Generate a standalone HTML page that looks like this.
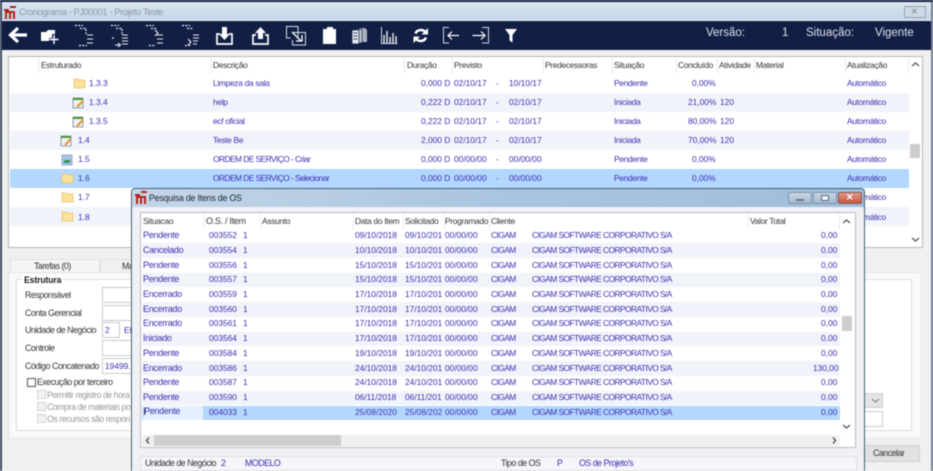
<!DOCTYPE html>
<html><head><meta charset="utf-8"><style>
html,body{margin:0;padding:0;width:933px;height:471px;overflow:hidden;background:#f0f0f0}
#w{position:absolute;left:0;top:0;width:933px;height:471px;overflow:hidden;font:8.4px "Liberation Sans",sans-serif;color:#3a2fb0;filter:blur(.4px)}
#w div,#w span,#w svg{position:absolute}
#w span{white-space:nowrap;line-height:11px}
.t{letter-spacing:-.3px}
.s{font-size:9px;letter-spacing:-.3px}
.u{letter-spacing:-.55px}
.l{font-size:8.8px;letter-spacing:-.48px}
.k{color:#333}
.r{height:19.2px;left:10px;width:899px}
.alt{background:#f1f3fa}
.d{height:14.7px;left:142px;width:698px}
.c{background:#fff;border:1px solid #c9c9c9;box-sizing:border-box}
.b{font-size:11.5px;color:#dfe4ee;line-height:14px}
.sep{width:1px;background:#e8e8e8}
.cb{background:#f2f2f2;border:1px solid #d4d4d4;box-sizing:border-box}
.g{color:#999}
</style></head><body><div id="w">
<!-- frame -->
<div style="left:0;top:0;width:933px;height:2px;background:#101c3e"></div>
<div style="left:0;top:2px;width:2px;height:469px;background:#3c4a5e"></div>
<div style="left:931px;top:2px;width:2px;height:469px;background:#6f7f90"></div>
<div style="left:2px;top:2px;width:929px;height:18px;background:linear-gradient(#dbe6f1,#c3d6e8)"></div>
<svg style="left:4px;top:6px" width="12" height="13" viewBox="0 0 12 13"><path d="M0 3h5v2H0zM6 0h6v2H6zM1 6h2v7H1zM5 6h2v7H5zM9 6h2v7H9zM1 5h10v2H1z" fill="#b3231c"/></svg>
<span style="left:19px;top:7px;font-size:9.2px;letter-spacing:-.36px;color:#8b96a2">Cronograma - PJ00001 - Projeto Teste</span>
<div style="left:904px;top:6px;width:22px;height:12px;border:1px solid #93a3b3;box-sizing:border-box;background:#ccd8e3"></div>
<span style="left:911px;top:6px;font-size:8px;color:#778">✕</span>
<!-- toolbar -->
<div style="left:2px;top:21px;width:929px;height:29px;background:#121f45"></div>
<svg style="left:0;top:21px" width="560" height="29" viewBox="0 0 560 29" fill="none" stroke="#fff">
<path d="M27 14H12M18 7L10.500 14 18 21" stroke-width="3.200"/>
<path d="M41 11h5l2-2h7v4h-3v4h-3v3h-8z" fill="#fff" stroke="none"/><path d="M54 14v9M49.500 18.500h9" stroke-width="1.400"/>
<g stroke-dasharray="2 1.300" stroke-width="1.200" stroke="#e8ebf2"><path d="M75 4.500h8M80 7.500h6M86 8v5M79 24.500h8"/><path d="M111 4.500h8M116 7.500h6M122 8v5M112 17h3"/><path d="M146 4.500h8M151 7.500h6M149 24.500h6"/><path d="M182 4.500h8M187 7.500h6M185 24.500h6"/></g>
<path d="M87 14h6M87 18h6M87 22h6M122 14h6M122 17h6M122 20h6M122 23h6M115 24h6M118 22l2.500 2-2.500 2M157 14h6M157 18h6M157 22h6M193 14h6M193 17h6M193 20h5M193 23h4" stroke-width="1" stroke="#e8ebf2"/>
<path d="M155 9l3 3-3 3M188 18l3 3-3 3" stroke-width="1"/>
<path d="M220 13h-3v10h15V13h-3" stroke-width="1.700"/><path d="M222 6h5v7h3l-5.500 6-5.500-6h3z" fill="#fff" stroke="none"/>
<path d="M256 14h-3v9h15v-9h-3" stroke-width="1.700"/><path d="M258 18V12h-3l5.500-6 5.500 6h-3v6z" fill="#fff" stroke="none"/>
<path d="M298 16V5.500h-11.500V17h4M292 11.500h13.500v12.500h-13v-5" stroke-width="1" stroke="#d8dde6"/><path d="M292 11l9 9M302 14v6h-6" stroke-width="1.300"/>
<path d="M323 8h4V6h6v2h3v15h-13z" fill="#fff" stroke="none"/>
<path d="M360 7h5l2 2v12h-7z" fill="#aab0bd" stroke="none"/><path d="M356 8h6v14h-6z" fill="#c4c9d3" stroke="#121f45" stroke-width=".7"/><path d="M352 9h7v14h-7z" fill="#e2e5ea" stroke="#121f45" stroke-width=".7"/><path d="M353.500 12h4M353.500 15h4M353.500 18h4" stroke="#121f45" stroke-width=".8"/>
<path d="M381.500 6v16.500h16" stroke-width="1" stroke="#d8dde6"/><path d="M384 22v-8M387 22v-12M390 22v-6M393 22v-10M396 22v-7" stroke-width="1.500" stroke="#dfe3ea"/>
<path d="M415.500 12.500c1.500-4 7-4.500 10-1.500M426 16.500c-1.500 4-7 4.500-10 1.500" stroke-width="2.500"/><path d="M428 7v6.500h-6.500zM413.500 22v-6.500h6.500z" fill="#fff" stroke="none"/>
<path d="M449 6.500h-5.500v15.500h5.500" stroke-width="1" stroke="#cfd5e0"/><path d="M459 14.500h-11M452 10.500l-4 4 4 4" stroke-width="1.200"/>
<path d="M482 6.500h6.500v15.500h-6.500" stroke-width="1" stroke="#cfd5e0"/><path d="M472.500 14.500h12M481 10.500l4 4-4 4" stroke-width="1.200"/>
<path d="M505 8h12l-4.500 6v7.500l-3-2v-5.500z" fill="#fff" stroke="none"/>
</svg>
<span class="b" style="left:706px;top:28px">Versão:</span>
<span class="b" style="left:782px;top:28px">1</span>
<span class="b" style="left:806px;top:28px">Situação:</span>
<span class="b" style="left:875px;top:28px">Vigente</span>
<!-- tree panel -->
<div class="c" style="left:8px;top:56px;width:915px;height:192px;border-color:#b8b8b8"></div>
<span class="k t" style="left:41px;top:60px">Estruturado</span><span class="k t" style="left:213px;top:60px">Descrição</span><span class="k t" style="left:407px;top:60px">Duração</span><span class="k t" style="left:454px;top:60px">Previsto</span><span class="k t" style="left:545px;top:60px">Predecessoras</span><span class="k t" style="left:614px;top:60px">Situação</span><span class="k t" style="left:678px;top:60px">Concluído</span><span class="k t" style="left:719px;top:60px">Atividade</span><span class="k t" style="left:756px;top:60px">Material</span><span class="k t" style="left:847px;top:60px">Atualização</span>
<div class="sep" style="left:38px;top:58px;height:15px"></div><div class="sep" style="left:211px;top:58px;height:15px"></div><div class="sep" style="left:404px;top:58px;height:15px"></div><div class="sep" style="left:452px;top:58px;height:15px"></div><div class="sep" style="left:543px;top:58px;height:15px"></div><div class="sep" style="left:612px;top:58px;height:15px"></div><div class="sep" style="left:676px;top:58px;height:15px"></div><div class="sep" style="left:717px;top:58px;height:15px"></div><div class="sep" style="left:754px;top:58px;height:15px"></div><div class="sep" style="left:845px;top:58px;height:15px"></div><div class="sep" style="left:908px;top:58px;height:15px"></div>
<div class="r alt" style="top:93px"></div><div class="r alt" style="top:131px"></div><div class="r" style="top:169px;background:#b3d7ff"></div><div class="r alt" style="top:207px"></div>
<!-- tree icons -->
<svg style="left:0;top:0" width="120" height="230" viewBox="0 0 120 230">
<g fill="#fae29a" stroke="#e8c06c" stroke-width=".8"><path d="M74 79h4l1 1h6v8H74z"/><path d="M62 174h4l1 1h6v8H62z"/><path d="M62 193h4l1 1h6v8H62z"/><path d="M62 212h4l1 1h6v8H62z"/></g>
<g fill="#eef0f3" stroke="#7b8794" stroke-width=".8"><path d="M73 98h10v10H73z"/><path d="M73 117h10v10H73z"/><path d="M61 136h10v10H61z"/></g>
<path d="M73 98h10v2H73zM73 117h10v2H73zM61 136h10v2H61z" fill="#4a9a3c"/>
<path d="M77 107l6-6M77 126l6-6M65 145l6-6" stroke="#d79a2b" stroke-width="2"/>
<path d="M62 155h10v10H62z" fill="#a9c6ea" stroke="#7c9cc5" stroke-width=".8"/><path d="M64 160h6v3h-6z" fill="#3f8f58"/>
</svg>
<span style="left:89px;top:78px">1.3.3</span><span class="t" style="left:213px;top:78px">Limpeza da sala</span><span style="left:421px;top:78px">0,000 D</span><span style="left:454px;top:78px">02/10/17</span><span style="left:496px;top:78px">-</span><span style="left:509px;top:78px">10/10/17</span><span class="t" style="left:614px;top:78px">Pendente</span><span style="left:692px;top:78px">0,00%</span><span class="t" style="left:847px;top:78px">Automático</span>
<span style="left:89px;top:97px">1.3.4</span><span class="t" style="left:213px;top:97px">help</span><span style="left:421px;top:97px">0,222 D</span><span style="left:454px;top:97px">02/10/17</span><span style="left:496px;top:97px">-</span><span style="left:509px;top:97px">02/10/17</span><span class="t" style="left:614px;top:97px">Iniciada</span><span style="left:688px;top:97px">21,00%</span><span style="left:720px;top:97px">120</span><span class="t" style="left:847px;top:97px">Automático</span>
<span style="left:89px;top:116px">1.3.5</span><span class="t" style="left:213px;top:116px">ecf oficial</span><span style="left:421px;top:116px">0,222 D</span><span style="left:454px;top:116px">02/10/17</span><span style="left:496px;top:116px">-</span><span style="left:509px;top:116px">02/10/17</span><span class="t" style="left:614px;top:116px">Iniciada</span><span style="left:688px;top:116px">80,00%</span><span style="left:720px;top:116px">120</span><span class="t" style="left:847px;top:116px">Automático</span>
<span style="left:78px;top:135px">1.4</span><span class="t" style="left:213px;top:135px">Teste Be</span><span style="left:421px;top:135px">2,000 D</span><span style="left:454px;top:135px">02/10/17</span><span style="left:496px;top:135px">-</span><span style="left:509px;top:135px">02/10/17</span><span class="t" style="left:614px;top:135px">Iniciada</span><span style="left:688px;top:135px">70,00%</span><span style="left:720px;top:135px">120</span><span class="t" style="left:847px;top:135px">Automático</span>
<span style="left:78px;top:154px">1.5</span><span class="u" style="left:213px;top:154px">ORDEM DE SERVIÇO - Criar</span><span style="left:421px;top:154px">0,000 D</span><span style="left:454px;top:154px">00/00/00</span><span style="left:496px;top:154px">-</span><span style="left:509px;top:154px">00/00/00</span><span class="t" style="left:614px;top:154px">Pendente</span><span style="left:692px;top:154px">0,00%</span><span class="t" style="left:847px;top:154px">Automático</span>
<span style="left:78px;top:173px">1.6</span><span class="u" style="left:213px;top:173px">ORDEM DE SERVIÇO - Selecionar</span><span style="left:421px;top:173px">0,000 D</span><span style="left:454px;top:173px">00/00/00</span><span style="left:496px;top:173px">-</span><span style="left:509px;top:173px">00/00/00</span><span class="t" style="left:614px;top:173px">Pendente</span><span style="left:692px;top:173px">0,00%</span><span class="t" style="left:847px;top:173px">Automático</span>
<span style="left:78px;top:192px">1.7</span><span class="t" style="left:847px;top:192px">Automático</span>
<span style="left:78px;top:212px">1.8</span><span class="t" style="left:847px;top:212px">Automático</span>
<!-- tree scrollbar -->
<div style="left:909px;top:57px;width:13px;height:190px;background:#fff"></div>
<svg style="left:910px;top:60px" width="11" height="8"><path d="M2 6l3.500-3 3.500 3" fill="none" stroke="#555" stroke-width="1.300"/></svg>
<svg style="left:910px;top:236px" width="11" height="8"><path d="M2 2l3.500 3 3.500-3" fill="none" stroke="#555" stroke-width="1.300"/></svg>
<div style="left:910px;top:144px;width:10px;height:14px;background:#cdcdcd"></div>
<!-- bottom left -->
<div style="left:10px;top:259px;width:90px;height:14px;background:#f5f5f5;border:1px solid #e0e0e0;box-sizing:border-box"></div>
<div style="left:100px;top:259px;width:40px;height:14px;background:#f0f0f0;border:1px solid #e0e0e0;box-sizing:border-box"></div>
<span class="k l" style="left:34px;top:261px">Tarefas (0)</span><span class="k l" style="left:122px;top:261px">Ma</span>
<div style="left:8px;top:272px;width:914px;height:167px;background:#f9f9f9;border:1px solid #e4e4e4;box-sizing:border-box"></div>
<div style="left:16px;top:279px;width:896px;height:152px;background:#fff;border:1px solid #dcdcdc;box-sizing:border-box"></div>
<span style="left:22px;top:275px;padding:0 2px;background:#fff;color:#222;font-weight:bold;font-size:8.800px;letter-spacing:-.2px">Estrutura</span>
<span class="k l" style="left:25px;top:290px">Responsável</span><span class="k l" style="left:25px;top:308px">Conta Gerencial</span><span class="k l" style="left:25px;top:325px">Unidade de Negócio</span><span class="k l" style="left:25px;top:343px">Controle</span><span class="k l" style="left:25px;top:361px">Código Concatenado</span>
<div class="c" style="left:102px;top:287px;width:40px;height:16px"></div><div class="c" style="left:102px;top:305px;width:40px;height:16px"></div><div class="c" style="left:102px;top:322px;width:18px;height:16px"></div><div class="c" style="left:102px;top:340px;width:40px;height:16px"></div><div class="c" style="left:102px;top:358px;width:40px;height:16px"></div>
<span style="left:105px;top:325px">2</span><span style="left:124px;top:325px">EM</span><span style="left:105px;top:361px">19499.</span>
<div style="left:27px;top:378px;width:9px;height:9px;background:#fff;border:1px solid #555;box-sizing:border-box"></div>
<span class="k l" style="left:37px;top:377px">Execução por terceiro</span>
<div class="cb" style="left:37px;top:390px;width:9px;height:9px"></div><div class="cb" style="left:37px;top:402px;width:9px;height:9px"></div><div class="cb" style="left:37px;top:414px;width:9px;height:9px"></div>
<span class="g l" style="left:47px;top:390px">Permitir registro de hora</span><span class="g l" style="left:47px;top:402px">Compra de materiais po</span><span class="g l" style="left:47px;top:414px">Os recursos são respon</span>
<!-- right bits -->
<div style="left:860px;top:393px;width:23px;height:15px;background:#e4e4e4;border:1px solid #ccc;box-sizing:border-box"></div>
<svg style="left:871px;top:398px" width="9" height="6"><path d="M1 1l3.500 3 3.500-3" fill="none" stroke="#777"/></svg>
<div class="c" style="left:860px;top:411px;width:23px;height:16px"></div>
<div style="left:860px;top:445px;width:60px;height:17px;background:#e1e1e1;border:1px solid #cfcfcf;box-sizing:border-box"></div>
<span class="k l" style="left:873px;top:448px">Cancelar</span>
<!-- dialog -->
<div style="left:131px;top:188px;width:734px;height:283px;background:#f0f0f6;border:1px solid #42606f;border-bottom:0;border-radius:4px 4px 0 0;box-sizing:border-box"></div>
<div style="left:132px;top:189px;width:732px;height:18px;background:linear-gradient(90deg,#c4d6e8,#aac5e0 50%,#9fbedb);border-radius:3px 3px 0 0"></div>
<svg style="left:135px;top:191px" width="12" height="13" viewBox="0 0 12 13"><path d="M0 3h5v2H0zM6 0h6v2H6zM1 6h2v7H1zM5 6h2v7H5zM9 6h2v7H9zM1 5h10v2H1z" fill="#b3231c"/></svg>
<span style="left:149px;top:193px;font-size:8.800px;letter-spacing:-.2px;color:#1a2230">Pesquisa de Itens de OS</span>
<div style="left:788px;top:192px;width:24px;height:12px;background:linear-gradient(#c9d7e5,#a3b9cd);border:1px solid #7e93a8;border-radius:2px;box-sizing:border-box"></div>
<div style="left:813px;top:192px;width:24px;height:12px;background:linear-gradient(#c9d7e5,#a3b9cd);border:1px solid #7e93a8;border-radius:2px;box-sizing:border-box"></div>
<div style="left:838px;top:192px;width:24px;height:12px;background:linear-gradient(#e59a88,#c8543e);border:1px solid #8a5a50;border-radius:2px;box-sizing:border-box"></div>
<div style="left:796px;top:199px;width:8px;height:2px;background:#eef2f6;border:1px solid #66788a;box-sizing:border-box"></div>
<div style="left:821px;top:195px;width:8px;height:6px;background:#eef2f6;border:1px solid #55677a;box-sizing:border-box"></div>
<span style="left:846px;top:192px;color:#fff;font-size:9px;font-weight:bold">✕</span>
<div style="left:140px;top:212px;width:716px;height:236px;background:#fff;border:1px solid #bdbdbd;box-sizing:border-box"></div>
<span class="k t" style="left:143px;top:216px">Situacao</span><span class="k s" style="left:206px;top:216px">O.S. / Item</span><span class="k t" style="left:262px;top:216px">Assunto</span><span class="k t" style="left:355px;top:216px">Data do Item</span><span class="k t" style="left:405px;top:216px">Solicitado</span><span class="k t" style="left:445px;top:216px">Programado</span><span class="k t" style="left:491px;top:216px">Cliente</span><span class="k t" style="left:750px;top:216px">Valor Total</span>
<div class="sep" style="left:204px;top:214px;height:15px"></div><div class="sep" style="left:260px;top:214px;height:15px"></div><div class="sep" style="left:353px;top:214px;height:15px"></div><div class="sep" style="left:403px;top:214px;height:15px"></div><div class="sep" style="left:444px;top:214px;height:15px"></div><div class="sep" style="left:489px;top:214px;height:15px"></div><div class="sep" style="left:748px;top:214px;height:15px"></div><div class="sep" style="left:839px;top:214px;height:15px"></div>
<div class="d alt" style="top:243px"></div><div class="d alt" style="top:272.500px"></div><div class="d alt" style="top:302px"></div><div class="d alt" style="top:331.500px"></div><div class="d alt" style="top:361px"></div><div class="d alt" style="top:390.500px"></div>
<div class="d" style="top:405.500px;background:#b3d7ff"></div>
<div style="left:143px;top:405.500px;width:60px;height:14px;background:#e3f0fd"></div>
<div style="left:144px;top:408px;width:1px;height:7px;background:#334"></div>
<span class="s" style="left:143px;top:230px">Pendente</span><span style="left:209px;top:230px">003552</span><span style="left:243px;top:230px">1</span><span style="left:355px;top:230px">09/10/2018</span><span style="left:405px;top:230px">09/10/201</span><span style="left:445px;top:230px">00/00/00</span><span class="u" style="left:491px;top:230px">CIGAM</span><span class="u" style="left:532px;top:230px">CIGAM SOFTWARE CORPORATIVO S/A</span><span style="left:821px;top:230px">0,00</span>
<span class="s" style="left:143px;top:244.500px">Cancelado</span><span style="left:209px;top:244.500px">003554</span><span style="left:243px;top:244.500px">1</span><span style="left:355px;top:244.500px">10/10/2018</span><span style="left:405px;top:244.500px">10/10/201</span><span style="left:445px;top:244.500px">00/00/00</span><span class="u" style="left:491px;top:244.500px">CIGAM</span><span class="u" style="left:532px;top:244.500px">CIGAM SOFTWARE CORPORATIVO S/A</span><span style="left:821px;top:244.500px">0,00</span>
<span class="s" style="left:143px;top:259.500px">Pendente</span><span style="left:209px;top:259.500px">003556</span><span style="left:243px;top:259.500px">1</span><span style="left:355px;top:259.500px">15/10/2018</span><span style="left:405px;top:259.500px">15/10/201</span><span style="left:445px;top:259.500px">00/00/00</span><span class="u" style="left:491px;top:259.500px">CIGAM</span><span class="u" style="left:532px;top:259.500px">CIGAM SOFTWARE CORPORATIVO S/A</span><span style="left:821px;top:259.500px">0,00</span>
<span class="s" style="left:143px;top:274px">Pendente</span><span style="left:209px;top:274px">003557</span><span style="left:243px;top:274px">1</span><span style="left:355px;top:274px">15/10/2018</span><span style="left:405px;top:274px">15/10/201</span><span style="left:445px;top:274px">00/00/00</span><span class="u" style="left:491px;top:274px">CIGAM</span><span class="u" style="left:532px;top:274px">CIGAM SOFTWARE CORPORATIVO S/A</span><span style="left:821px;top:274px">0,00</span>
<span class="s" style="left:143px;top:289px">Encerrado</span><span style="left:209px;top:289px">003559</span><span style="left:243px;top:289px">1</span><span style="left:355px;top:289px">17/10/2018</span><span style="left:405px;top:289px">17/10/201</span><span style="left:445px;top:289px">00/00/00</span><span class="u" style="left:491px;top:289px">CIGAM</span><span class="u" style="left:532px;top:289px">CIGAM SOFTWARE CORPORATIVO S/A</span><span style="left:821px;top:289px">0,00</span>
<span class="s" style="left:143px;top:303.500px">Encerrado</span><span style="left:209px;top:303.500px">003560</span><span style="left:243px;top:303.500px">1</span><span style="left:355px;top:303.500px">17/10/2018</span><span style="left:405px;top:303.500px">17/10/201</span><span style="left:445px;top:303.500px">00/00/00</span><span class="u" style="left:491px;top:303.500px">CIGAM</span><span class="u" style="left:532px;top:303.500px">CIGAM SOFTWARE CORPORATIVO S/A</span><span style="left:821px;top:303.500px">0,00</span>
<span class="s" style="left:143px;top:318px">Encerrado</span><span style="left:209px;top:318px">003561</span><span style="left:243px;top:318px">1</span><span style="left:355px;top:318px">17/10/2018</span><span style="left:405px;top:318px">17/10/201</span><span style="left:445px;top:318px">00/00/00</span><span class="u" style="left:491px;top:318px">CIGAM</span><span class="u" style="left:532px;top:318px">CIGAM SOFTWARE CORPORATIVO S/A</span><span style="left:821px;top:318px">0,00</span>
<span class="s" style="left:143px;top:333px">Iniciado</span><span style="left:209px;top:333px">003564</span><span style="left:243px;top:333px">1</span><span style="left:355px;top:333px">17/10/2018</span><span style="left:405px;top:333px">17/10/201</span><span style="left:445px;top:333px">00/00/00</span><span class="u" style="left:491px;top:333px">CIGAM</span><span class="u" style="left:532px;top:333px">CIGAM SOFTWARE CORPORATIVO S/A</span><span style="left:821px;top:333px">0,00</span>
<span class="s" style="left:143px;top:348px">Pendente</span><span style="left:209px;top:348px">003584</span><span style="left:243px;top:348px">1</span><span style="left:355px;top:348px">19/10/2018</span><span style="left:405px;top:348px">19/10/201</span><span style="left:445px;top:348px">00/00/00</span><span class="u" style="left:491px;top:348px">CIGAM</span><span class="u" style="left:532px;top:348px">CIGAM SOFTWARE CORPORATIVO S/A</span><span style="left:821px;top:348px">0,00</span>
<span class="s" style="left:143px;top:362.500px">Encerrado</span><span style="left:209px;top:362.500px">003586</span><span style="left:243px;top:362.500px">1</span><span style="left:355px;top:362.500px">24/10/2018</span><span style="left:405px;top:362.500px">24/10/201</span><span style="left:445px;top:362.500px">00/00/00</span><span class="u" style="left:491px;top:362.500px">CIGAM</span><span class="u" style="left:532px;top:362.500px">CIGAM SOFTWARE CORPORATIVO S/A</span><span style="left:813px;top:362.500px">130,00</span>
<span class="s" style="left:143px;top:377px">Pendente</span><span style="left:209px;top:377px">003587</span><span style="left:243px;top:377px">1</span><span style="left:355px;top:377px">24/10/2018</span><span style="left:405px;top:377px">24/10/201</span><span style="left:445px;top:377px">00/00/00</span><span class="u" style="left:491px;top:377px">CIGAM</span><span class="u" style="left:532px;top:377px">CIGAM SOFTWARE CORPORATIVO S/A</span><span style="left:821px;top:377px">0,00</span>
<span class="s" style="left:143px;top:392px">Pendente</span><span style="left:209px;top:392px">003590</span><span style="left:243px;top:392px">1</span><span style="left:355px;top:392px">06/11/2018</span><span style="left:405px;top:392px">06/11/201</span><span style="left:445px;top:392px">00/00/00</span><span class="u" style="left:491px;top:392px">CIGAM</span><span class="u" style="left:532px;top:392px">CIGAM SOFTWARE CORPORATIVO S/A</span><span style="left:821px;top:392px">0,00</span>
<span class="s" style="left:144px;top:406px">Pendente</span><span style="left:209px;top:407px">004033</span><span style="left:243px;top:407px">1</span><span style="left:355px;top:407px">25/08/2020</span><span style="left:405px;top:407px">25/08/202</span><span style="left:445px;top:407px">00/00/00</span><span class="u" style="left:491px;top:407px">CIGAM</span><span class="u" style="left:532px;top:407px">CIGAM SOFTWARE CORPORATIVO S/A</span><span style="left:821px;top:407px">0,00</span>
<!-- dialog scrollbars -->
<svg style="left:841px;top:217px" width="11" height="8"><path d="M2 6l3.500-3 3.500 3" fill="none" stroke="#555" stroke-width="1.300"/></svg>
<svg style="left:841px;top:423px" width="11" height="8"><path d="M2 2l3.500 3 3.500-3" fill="none" stroke="#555" stroke-width="1.300"/></svg>
<div style="left:842px;top:316px;width:10px;height:15px;background:#cdcdcd"></div>
<div style="left:142px;top:435px;width:698px;height:11px;background:#f0f0f0"></div>
<div style="left:154px;top:435px;width:187px;height:11px;background:#cdcdcd"></div>
<svg style="left:144px;top:436px" width="8" height="9"><path d="M5 1.500L2.500 4.500 5 7.500" fill="none" stroke="#444" stroke-width="1.300"/></svg>
<svg style="left:830px;top:436px" width="8" height="9"><path d="M3 1.500l2.500 3-2.500 3" fill="none" stroke="#444" stroke-width="1.300"/></svg>
<!-- dialog footer -->
<div style="left:140px;top:456px;width:717px;height:15px;background:#f5f5fa;border:1px solid #dfdfe6;box-sizing:border-box"></div>
<span class="k l" style="left:145px;top:458px">Unidade de Negócio</span><span class="l" style="left:221px;top:458px">2</span><span class="l" style="left:245px;top:458px">MODELO</span><span class="k l" style="left:501px;top:458px">Tipo de OS</span><span class="l" style="left:557px;top:458px">P</span><span class="l" style="left:579px;top:458px">OS de Projeto's</span>
</div></body></html>
